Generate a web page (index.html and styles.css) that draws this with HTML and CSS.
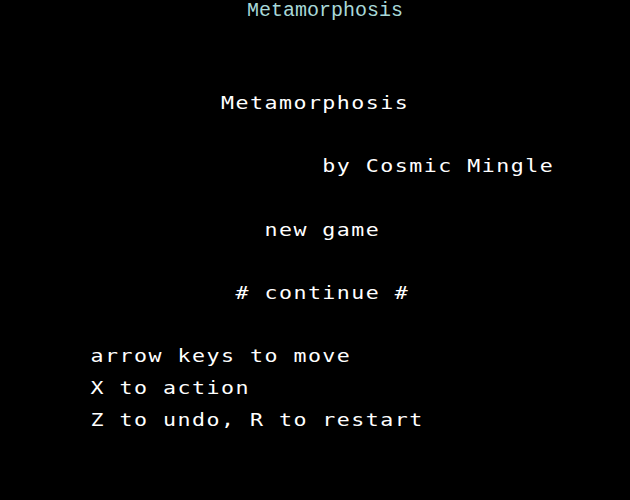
FILE: index.html
```html
<!DOCTYPE html>
<html>
<head>
<meta charset="utf-8">
<title>Metamorphosis</title>
<link rel="stylesheet" href="styles.css">
</head>
<body>
<div class="header">Metamorphosis</div>
<div class="screen">
<div class="grid">
<div class="row"> </div>
<div class="row"> </div>
<div class="row">          Metamorphosis</div>
<div class="row"> </div>
<div class="row">                 by Cosmic Mingle</div>
<div class="row"> </div>
<div class="row">             new game</div>
<div class="row"> </div>
<div class="row">           # continue #</div>
<div class="row"> </div>
<div class="row"> arrow keys to move</div>
<div class="row"> X to action</div>
<div class="row"> Z to undo, R to restart</div>
</div>
</div>
</body>
</html>
```
FILE: styles.css
```css
html, body {
  margin: 0;
  padding: 0;
  background: #000;
  overflow: hidden;
}
.header {
  height: 23.5px;
  box-sizing: border-box;
  padding-left: 20px;
  text-align: center;
  font-family: "Liberation Mono", monospace;
  font-size: 20px;
  line-height: 22.7px;
  color: #a8d8d8;
}
.screen {
  padding-left: 75.5px;
}
.grid {
  width: 411px;
  transform: scaleX(1.2);
  transform-origin: 0 0;
  font-family: "DejaVu Sans Mono", monospace;
  font-size: 18px;
  letter-spacing: 1.24px;
  color: #fff;
}
.row {
  white-space: pre;
  height: 31.7px;
  line-height: 31.7px;
}
```
